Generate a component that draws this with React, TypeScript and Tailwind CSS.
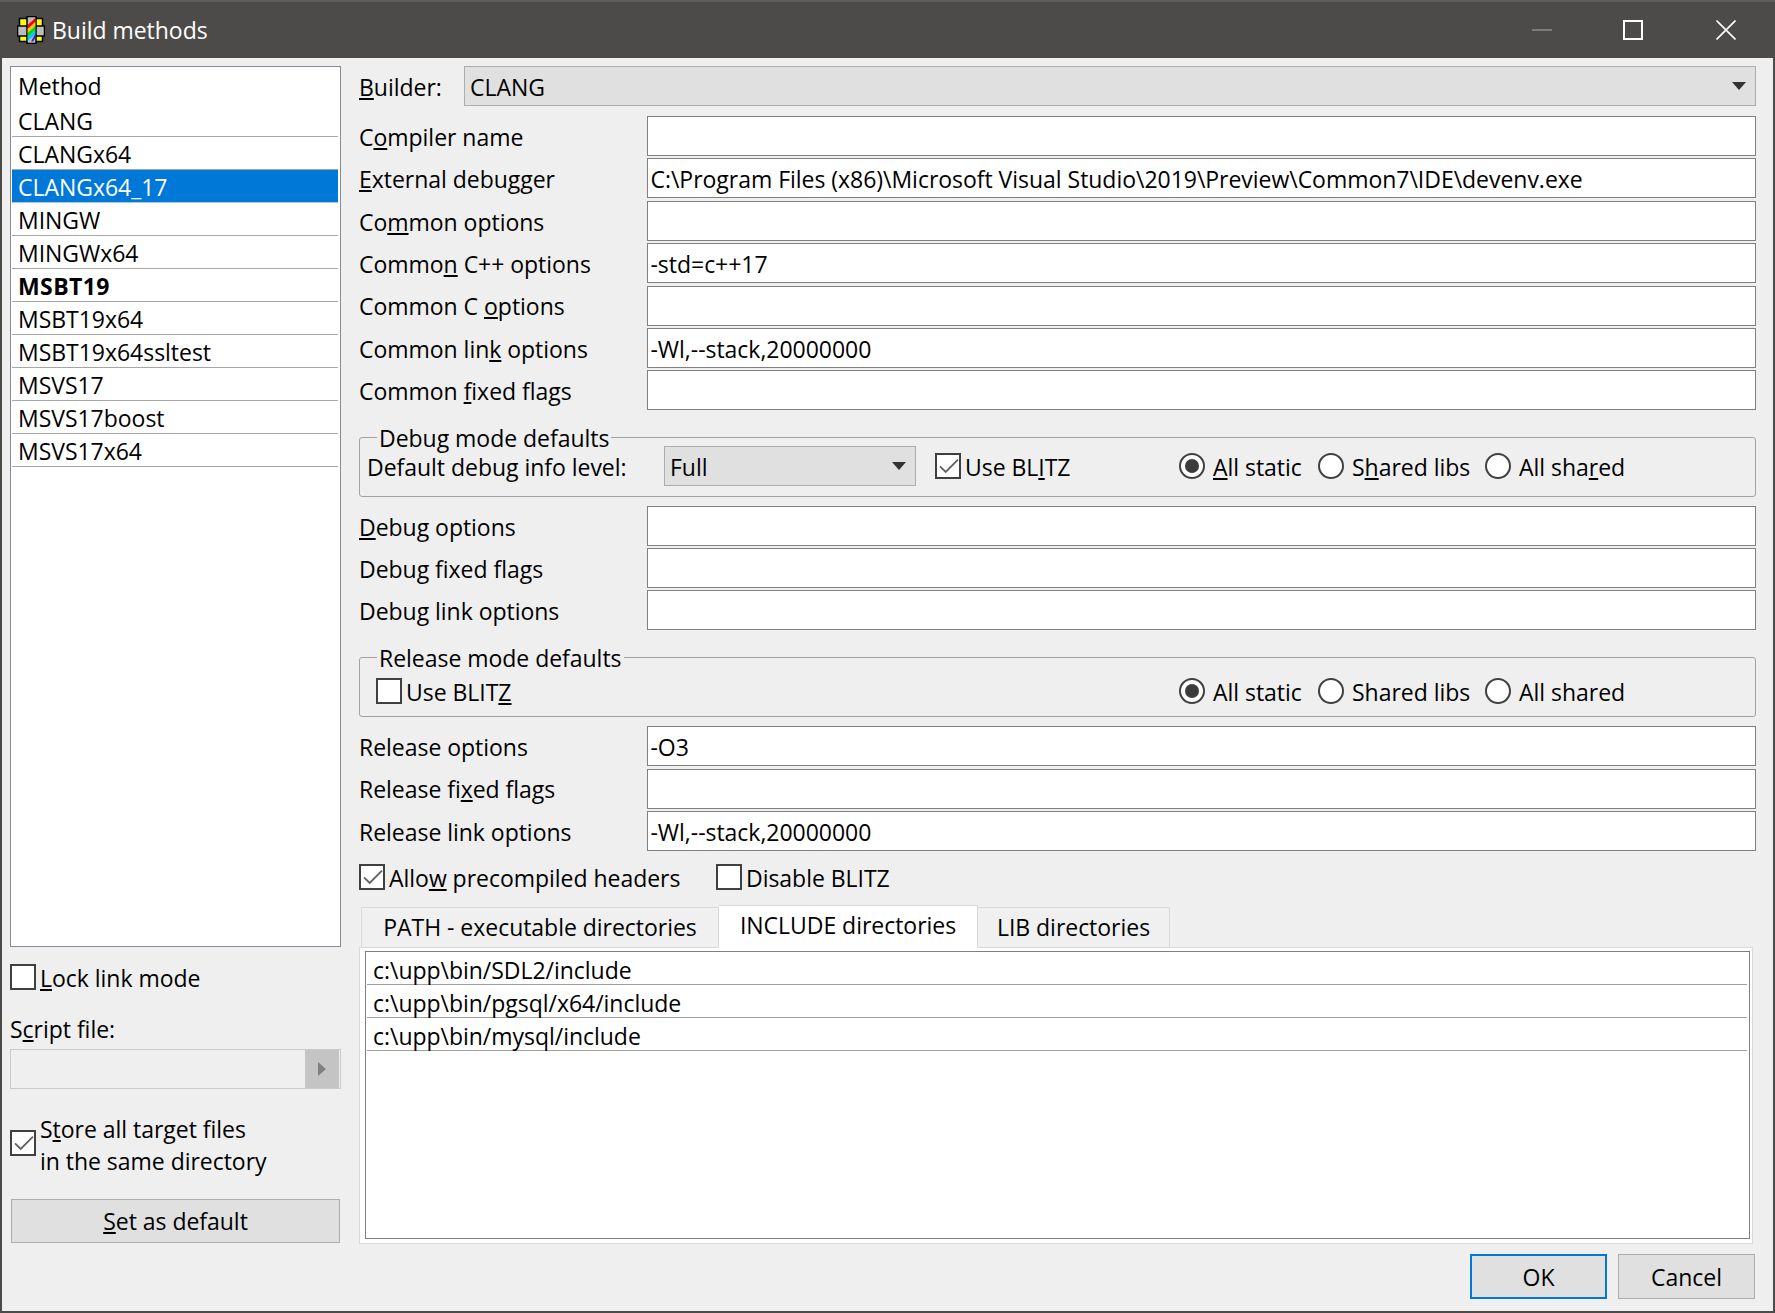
import React from 'react';

const methods = ['CLANG', 'CLANGx64', 'CLANGx64_17', 'MINGW', 'MINGWx64', 'MSBT19', 'MSBT19x64', 'MSBT19x64ssltest', 'MSVS17', 'MSVS17boost', 'MSVS17x64'];

const Field: React.FC<{ label: React.ReactNode; value?: string }> = ({ label, value }) => (
  <div className="flex items-center h-[40px]">
    <div className="w-[288px] pt-[2px] shrink-0 whitespace-nowrap">{label}</div>
    <div className="flex-1 h-full flex items-center bg-white border-[1.5px] border-[#808080] pl-[2.5px] pt-[2px] whitespace-nowrap">{value}</div>
  </div>
);

const Arrow: React.FC = () => (
  <svg width="14" height="8" viewBox="0 0 14 8" className="shrink-0">
    <path d="M0 0H14L7 8Z" fill="#333" />
  </svg>
);

const Combo: React.FC<{ value: string; className: string }> = ({ value, className }) => (
  <div className={`h-[40px] flex items-center justify-between bg-[#e0e0e0] border-[1.5px] border-[#adadad] pl-[5px] pr-[9px] ${className}`}>
    <span className="pt-[2px]">{value}</span>
    <Arrow />
  </div>
);

const Check: React.FC<{ checked?: boolean; className?: string }> = ({ checked, className }) => (
  <span className={`w-[26px] h-[26px] shrink-0 bg-white border-2 border-[#404040] block ${className ?? ''}`}>
    {checked && (
      <svg width="22" height="22" viewBox="0 0 22 22">
        <path d="M3 11.3L8.7 17L21 4.7" fill="none" stroke="#606060" strokeWidth="1.8" />
      </svg>
    )}
  </span>
);

const CheckLabel: React.FC<{ checked?: boolean; children: React.ReactNode }> = ({ checked, children }) => (
  <div className="flex items-center h-[26px] whitespace-nowrap">
    <Check checked={checked} />
    <span className="ml-[4px] pt-[2px]">{children}</span>
  </div>
);

const Radio: React.FC<{ on?: boolean; className: string; children: React.ReactNode }> = ({ on, className, children }) => (
  <div className={`flex items-center whitespace-nowrap ${className}`}>
    <span className="w-[26px] h-[26px] shrink-0 rounded-full bg-white border-2 border-[#404040] flex items-center justify-center">
      {on && <span className="w-[14px] h-[14px] rounded-full bg-[#3c3c3c]" />}
    </span>
    <span className="ml-[8px] pt-[2px]">{children}</span>
  </div>
);

const Group: React.FC<{ title: string; className: string; children: React.ReactNode }> = ({ title, className, children }) => (
  <div className={`relative h-[60px] border-[1.5px] border-[#a3a3a3] rounded-[3px] flex items-center ${className}`}>
    <span className="absolute left-[17px] top-[-12px] bg-[#efefef] px-[2px] leading-[24px] whitespace-nowrap">{title}</span>
    {children}
  </div>
);

const Tab: React.FC<{ active?: boolean; className: string; children: React.ReactNode }> = ({ active, className, children }) => (
  <div className={`flex items-center justify-center border-t-[1.5px] border-r-[1.5px] border-[#d9d9d9] whitespace-nowrap ${active ? 'h-[43px] bg-white -mb-[1px] relative pb-[3px]' : 'h-[40px] bg-[#f0f0f0]'} ${className}`}>
    {children}
  </div>
);

const DirRow: React.FC<{ children: React.ReactNode }> = ({ children }) => (
  <div className="h-[33px] flex items-center pl-[6px] pt-[4px] border-b-[1.5px] border-[#a0a0a0] mr-[2px] ml-[1px]">{children}</div>
);

const Btn: React.FC<{ className: string; children: React.ReactNode }> = ({ className, children }) => (
  <div className={`flex items-center justify-center bg-[#e0e0e0] pt-[1px] ${className}`}>{children}</div>
);

export default function App() {
  return (
    <div className="w-[1775px] h-[1313px] flex flex-col bg-[#efefef] text-black text-[23px] tracking-[-0.03px] font-['Open_Sans',sans-serif]">
      <div className="h-[58px] shrink-0 flex items-center bg-[#4d4b49] border-t-[2px] border-[#5e5d5b] text-white relative">
        <svg width="28" height="28" viewBox="0 0 28 28" className="ml-[17px]">
          <rect x="2.5" y="2.5" width="23" height="23" fill="#ffff00" stroke="#000" strokeWidth="1.5" />
          <rect x="0.5" y="10" width="27" height="10" fill="#bdbdbd" stroke="#000" strokeWidth="1.5" />
          <rect x="10" y="0.5" width="9" height="27" fill="#bdbdbd" stroke="#000" strokeWidth="1.5" />
          <path d="M10.7 9L18.3 2V6L10.7 13Z" fill="#ff0000" />
          <path d="M10.7 13L18.3 6V10L10.7 17Z" fill="#ffc800" />
          <path d="M10.7 17L18.3 10V14L10.7 21Z" fill="#00e000" />
          <path d="M10.7 21L18.3 14V18L10.7 25Z" fill="#00c8ff" />
          <path d="M14 25.5L18.3 18V22L16 25.5Z" fill="#2020ff" />
        </svg>
        <span className="ml-[7px]">Build methods</span>
        <div className="ml-auto flex items-center pr-[39px]">
          <svg width="20" height="20" viewBox="0 0 20 20">
            <path d="M0 10H20" stroke="#7d7c7a" strokeWidth="2" />
          </svg>
          <svg width="20" height="20" viewBox="0 0 20 20" className="ml-[71px]">
            <rect x="1" y="1" width="18" height="18" fill="none" stroke="#fff" strokeWidth="2" />
          </svg>
          <svg width="20" height="20" viewBox="0 0 20 20" className="ml-[73px]">
            <path d="M0.5 0.5L19.5 19.5M19.5 0.5L0.5 19.5" stroke="#fff" strokeWidth="1.6" />
          </svg>
        </div>
      </div>

      <div className="flex-1 flex border-x-2 border-b-2 border-[#4d4b49] pl-[8px] pt-[8px]">
        <div className="w-[331px] shrink-0 mr-[18px] flex flex-col">
          <div className="h-[881px] bg-white border-[1.5px] border-[#858a94] flex flex-col">
            <div className="h-[36.5px] pl-[7px] pt-[1px] flex items-center shrink-0">Method</div>
            {methods.map((m) => (
              <div
                key={m}
                className={`h-[33px] shrink-0 pl-[6px] pt-[3px] flex items-center border-b-[1.5px] mr-[2px] ml-[1px] ${m === 'CLANGx64_17' ? 'bg-[#0078d7] text-white border-[#a9c9e6]' : 'border-[#a6a6a6]'} ${m === 'MSBT19' ? 'font-bold tracking-[0.4px]' : ''}`}
              >
                {m}
              </div>
            ))}
          </div>
          <div className="mt-[17px]">
            <CheckLabel><u>L</u>ock link mode</CheckLabel>
          </div>
          <div className="mt-[24px] h-[30px] leading-[30px]">S<u>c</u>ript file:</div>
          <div className="mt-[5px] h-[40px] border-[1.5px] border-[#cacaca] flex justify-end pr-[1px]">
            <div className="w-[34px] bg-[#c4c4c4] flex items-center justify-center">
              <svg width="8" height="14" viewBox="0 0 8 14">
                <path d="M0 0L8 7L0 14Z" fill="#808080" />
              </svg>
            </div>
          </div>
          <div className="mt-[24px] h-[64px] flex">
            <Check checked className="mt-[17px]" />
            <div className="ml-[4px] leading-[32px] whitespace-nowrap">
              S<u>t</u>ore all target files<br />in the same directory
            </div>
          </div>
          <Btn className="mt-[22px] mx-[1px] h-[44px] border-[1.5px] border-[#adadad]"><span><u>S</u>et as default</span></Btn>
        </div>

        <div className="w-[1397px] shrink-0 flex flex-col">
          <div className="flex items-center h-[40px]">
            <div className="w-[105px] pt-[2px] shrink-0"><u>B</u>uilder:</div>
            <Combo value="CLANG" className="flex-1" />
          </div>

          <div className="mt-[10px] flex flex-col gap-[2.4px]">
            <Field label={<>C<u>o</u>mpiler name</>} />
            <Field label={<><u>E</u>xternal debugger</>} value="C:\Program Files (x86)\Microsoft Visual Studio\2019\Preview\Common7\IDE\devenv.exe" />
            <Field label={<>Co<u>m</u>mon options</>} />
            <Field label={<>Commo<u>n</u> C++ options</>} value="-std=c++17" />
            <Field label={<>Common C <u>o</u>ptions</>} />
            <Field label={<>Common lin<u>k</u> options</>} value="-Wl,--stack,20000000" />
            <Field label={<>Common <u>f</u>ixed flags</>} />
          </div>

          <Group title="Debug mode defaults" className="mt-[27px] items-start pt-[8px]">
            <div className="w-[819px] shrink-0 flex items-center">
              <div className="w-[304px] pl-[7px] pt-[2px] shrink-0 whitespace-nowrap">Default debug info level:</div>
              <Combo value="Full" className="w-[252px] shrink-0" />
              <div className="ml-[19px]">
                <CheckLabel checked>Use BL<u>I</u>TZ</CheckLabel>
              </div>
            </div>
            <div className="flex h-[40px] items-center">
              <Radio on className="w-[139px]"><u>A</u>ll static</Radio>
              <Radio className="w-[167px]">S<u>h</u>ared libs</Radio>
              <Radio className="w-[139px]">All sha<u>r</u>ed</Radio>
            </div>
          </Group>

          <div className="mt-[9px] flex flex-col gap-[2px]">
            <Field label={<><u>D</u>ebug options</>} />
            <Field label={<>Debu<u>g</u> fixed flags</>} />
            <Field label="Debug link options" />
          </div>

          <Group title="Release mode defaults" className="mt-[27px] pt-[8px]">
            <div className="w-[819px] shrink-0 pl-[16px]">
              <CheckLabel>Use BLIT<u>Z</u></CheckLabel>
            </div>
            <div className="flex items-center">
              <Radio on className="w-[139px]">All static</Radio>
              <Radio className="w-[167px]">Shared libs</Radio>
              <Radio className="w-[139px]">All shared</Radio>
            </div>
          </Group>

          <div className="mt-[9px] flex flex-col gap-[2.3px]">
            <Field label="Release options" value="-O3" />
            <Field label={<>Release fi<u>x</u>ed flags</>} />
            <Field label="Release link options" value="-Wl,--stack,20000000" />
          </div>

          <div className="mt-[13px] flex">
            <div className="w-[357px] shrink-0">
              <CheckLabel checked>Allo<u>w</u> precompiled headers</CheckLabel>
            </div>
            <CheckLabel>Disable BLITZ</CheckLabel>
          </div>

          <div className="mt-[15px] h-[42px] flex items-end pl-[2px]">
            <Tab className="w-[358px] border-l-[1.5px]">PATH - executable directories</Tab>
            <Tab active className="w-[259px]">INCLUDE directories</Tab>
            <Tab className="w-[192px]">LIB directories</Tab>
          </div>

          <div className="h-[297px] w-[1394px] bg-white border-[1.5px] border-[#d9d9d9] p-[3px_2px_4px_5px]">
            <div className="h-full border-[1.5px] border-[#808080]">
              <DirRow>c:\upp\bin/SDL2/include</DirRow>
              <DirRow>c:\upp\bin/pgsql/x64/include</DirRow>
              <DirRow>c:\upp\bin/mysql/include</DirRow>
            </div>
          </div>

          <div className="mt-[10px] flex justify-end pr-[1px] gap-[11px]">
            <Btn className="w-[137px] h-[45px] border-2 border-[#0078d7]">OK</Btn>
            <Btn className="w-[137px] h-[45px] border-[1.5px] border-[#adadad]">Cancel</Btn>
          </div>
        </div>
      </div>
    </div>
  );
}
